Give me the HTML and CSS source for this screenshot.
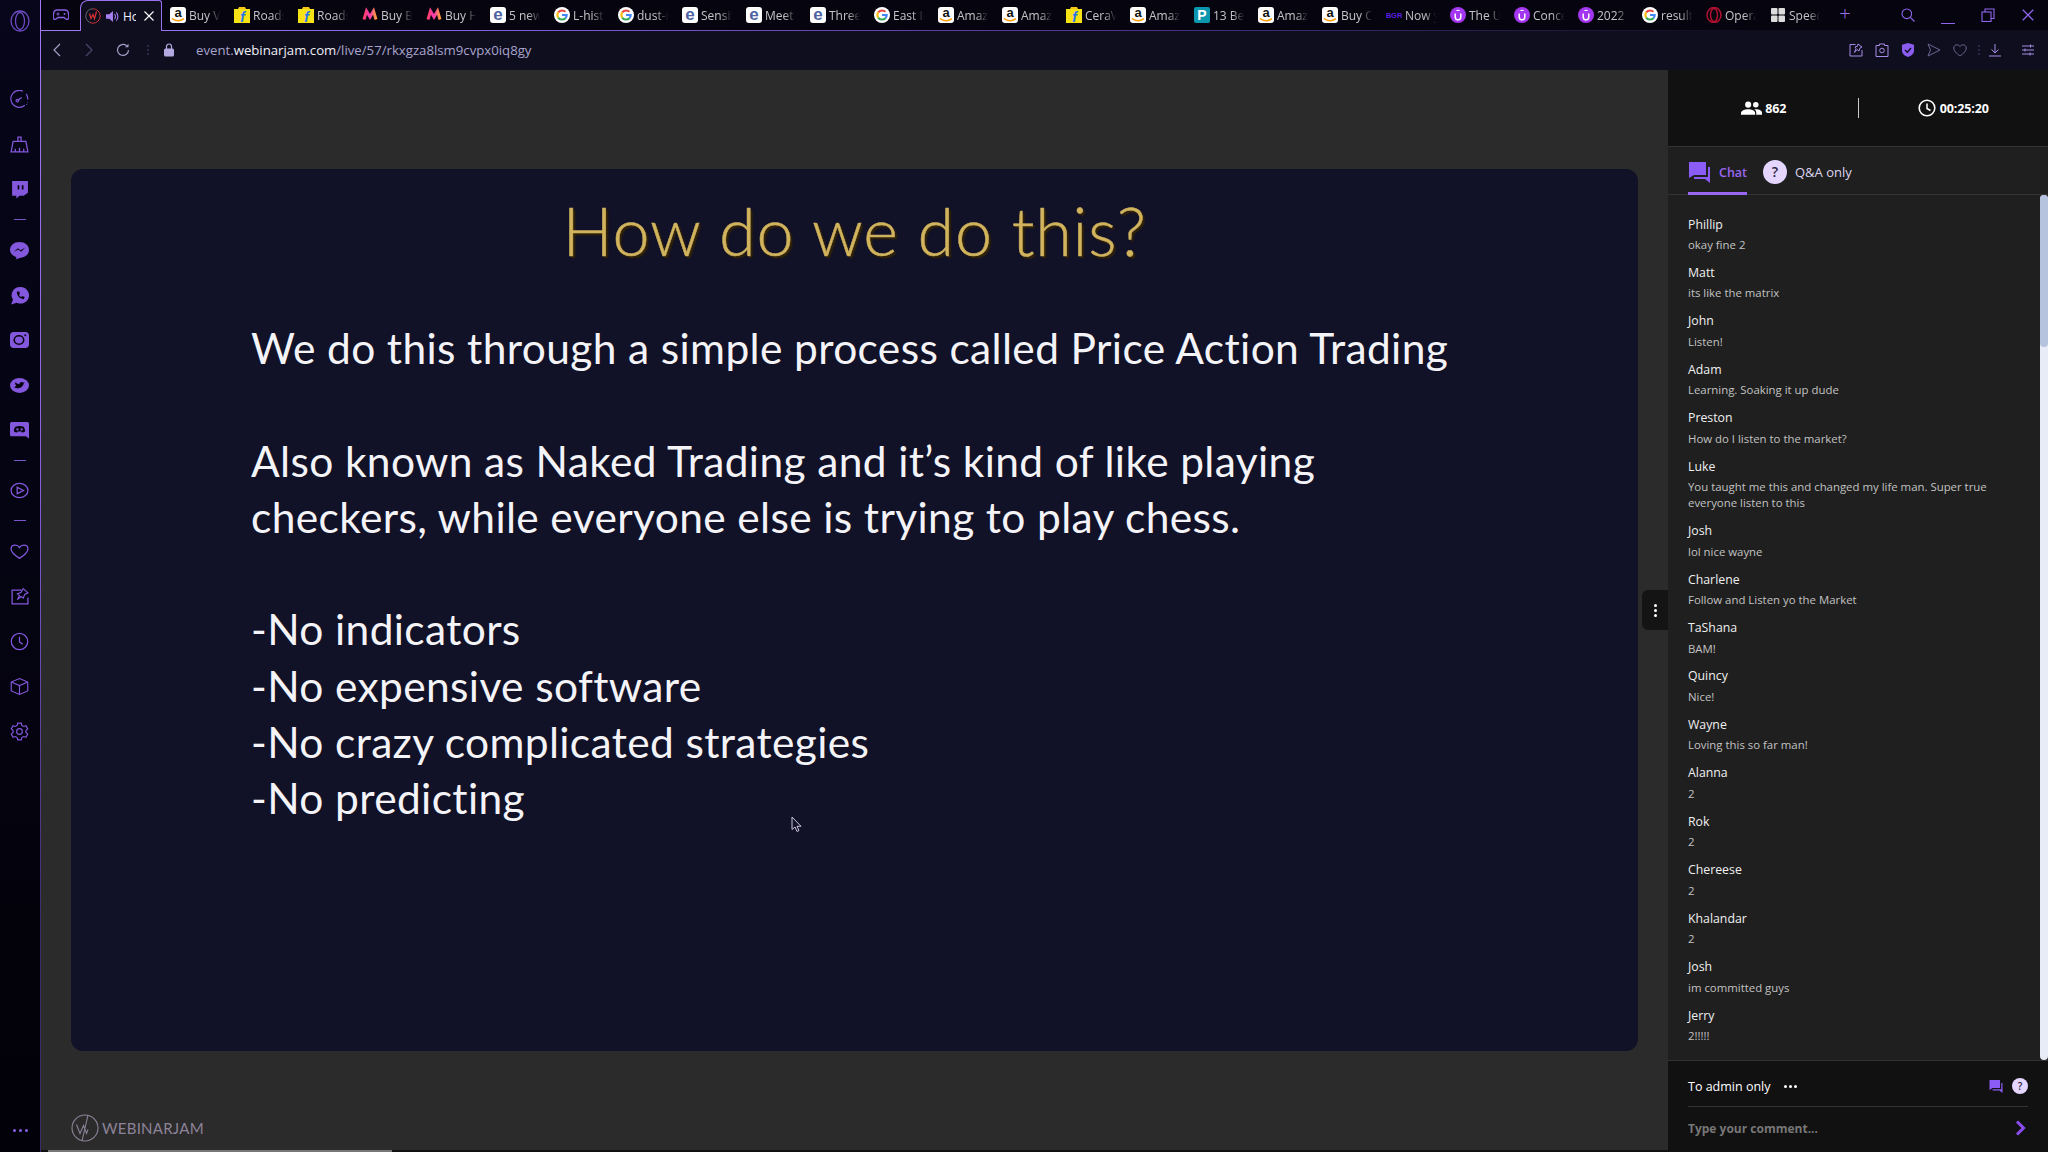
FILE: index.html
```html
<!doctype html>
<html>
<head>
<meta charset="utf-8">
<title>WebinarJam</title>
<link rel="stylesheet" href="styles.css">
</head>
<body>
<svg class="sprite" width="0" height="0">
	<defs>
		<linearGradient id="myn" x1="0" y1="0" x2="1" y2="0"><stop offset="0" stop-color="#ff3f6c"/><stop offset=".5" stop-color="#f13ab1"/><stop offset="1" stop-color="#ff9a3c"/></linearGradient>
		<!-- favicons -->
		<symbol id="f-amz" viewBox="0 0 16 16"><rect width="16" height="16" rx="3" fill="#fff"/><text x="8" y="10" font-size="13" font-weight="700" font-family="Liberation Sans" text-anchor="middle" fill="#111">a</text><path d="M2 11.5c3.500 2.800 8 2.800 12 .2" fill="none" stroke="#f90" stroke-width="1.600"/></symbol>
		<symbol id="f-flip" viewBox="0 0 16 16"><path d="M0 2h16v14H0z" fill="#f7e215"/><path d="M4 2l1-2h6l1 2z" fill="#f5c518"/><text x="8.500" y="14.500" font-size="14" font-weight="700" font-style="italic" font-family="Liberation Sans" text-anchor="middle" fill="#2874f0">f</text></symbol>
		<symbol id="f-myn" viewBox="0 0 16 16"><path d="M2 12.500L4.500 4 8 10l3.500-6L14 12.500" fill="none" stroke="url(#myn)" stroke-width="3"/></symbol>
		<symbol id="f-e" viewBox="0 0 16 16"><rect width="16" height="16" rx="3" fill="#fff"/><text x="8" y="13" font-size="17" font-weight="700" font-family="Liberation Sans" text-anchor="middle" fill="#4d63a5">e</text></symbol>
		<symbol id="f-g" viewBox="0 0 16 16"><circle cx="8" cy="8" r="8" fill="#fff"/><path d="M11.400 4.800A4.700 4.700 0 0 0 4.200 5.400" fill="none" stroke="#ea4335" stroke-width="2"/><path d="M4.200 5.400a4.700 4.700 0 0 0 0 5.200" fill="none" stroke="#fbbc05" stroke-width="2"/><path d="M4.200 10.600a4.700 4.700 0 0 0 7.400.4" fill="none" stroke="#34a853" stroke-width="2"/><path d="M11.600 11a4.700 4.700 0 0 0 1.100-3H8" fill="none" stroke="#4285f4" stroke-width="2"/></symbol>
		<symbol id="f-u" viewBox="0 0 16 16"><circle cx="8" cy="8" r="8" fill="#a435f0"/><path d="M5.200 6.500v3.600a2.800 2.800 0 0 0 5.600 0V6.500" fill="none" stroke="#fff" stroke-width="1.500"/><path d="M8 2.500l2.500 1.500h-5z" fill="#fff"/></symbol>
		<symbol id="f-p" viewBox="0 0 16 16"><rect width="16" height="16" rx="2" fill="#0b97b0"/><text x="8" y="13" font-size="14" font-weight="700" font-family="Liberation Sans" text-anchor="middle" fill="#fff">P</text></symbol>
		<symbol id="f-bgr" viewBox="0 0 16 16"><text x="8" y="11" font-size="7.500" font-weight="700" font-family="Liberation Sans" text-anchor="middle" fill="#5a1fe0">BGR</text></symbol>
		<symbol id="f-op" viewBox="0 0 16 16"><ellipse cx="8" cy="8" rx="7" ry="7.500" fill="none" stroke="#b01030" stroke-width="1.500"/><ellipse cx="8" cy="8" rx="3.500" ry="6.500" fill="none" stroke="#b01030" stroke-width="1.500"/></symbol>
		<symbol id="f-sp" viewBox="0 0 16 16"><g fill="#ddd"><rect x="1" y="1" width="6.500" height="6.500" rx="1"/><rect x="8.500" y="1" width="6.500" height="6.500" rx="1"/><rect x="1" y="8.500" width="6.500" height="6.500" rx="1"/><rect x="8.500" y="8.500" width="6.500" height="6.500" rx="1"/></g></symbol>
		<symbol id="f-wj" viewBox="0 0 16 16"><path d="M8 .8a7.200 7.200 0 0 0-3 13.700" fill="none" stroke="#666" stroke-width="1"/><path d="M8 .8a7.200 7.200 0 0 1 0 14.400 7 7 0 0 1-3-.7" fill="none" stroke="#c33" stroke-width="1"/><path d="M4.500 5.500l1.500 5 2-4 1.500 4 2-7" fill="none" stroke="#d33" stroke-width="1.200"/></symbol>

		<!-- sidebar -->
		<symbol id="s-opera" viewBox="0 0 20 22"><ellipse cx="10" cy="11" rx="9" ry="10" fill="none" stroke="currentColor" stroke-width="1.300"/><ellipse cx="10" cy="11" rx="4.500" ry="8.500" fill="none" stroke="currentColor" stroke-width="1.300"/></symbol>
		<symbol id="s-speed" viewBox="0 0 18 18"><path d="M14 14.500A8 8 0 1 1 16.800 9" fill="none" stroke="currentColor" stroke-width="1.100" stroke-dasharray="34 4"/><path d="M7 10l4-3" stroke="currentColor" stroke-width="1.200"/><circle cx="7" cy="10" r="1.300" fill="none" stroke="currentColor"/><path d="M16.500 11.500v.6M15.800 13.500v.6" stroke="currentColor"/></symbol>
		<symbol id="s-broom" viewBox="0 0 18 18"><path d="M7.500 6V2h3v4M3 6h12l2 10H1z M5 16v-3M9 16v-4M13 16v-3" fill="none" stroke="currentColor" stroke-width="1.200"/></symbol>
		<symbol id="s-twitch" viewBox="0 0 18 18"><path d="M2 1h15v11l-4 3H9l-3 2.500V15H2z" fill="currentColor"/><path d="M8 5v4M12 5v4" stroke="#06050f" stroke-width="1.600"/></symbol>
		<symbol id="s-msg" viewBox="0 0 18 18"><path d="M9 1c5 0 9 3.200 9 7.500S14 16 9 16l-3 1.500V15.300C2.500 14 0 11.500 0 8.500 0 4.200 4 1 9 1z" fill="currentColor"/><path d="M3.500 10.500L7.500 6.800l2.500 2 4.500-2.600-4 3.900-2.600-2z" fill="#06050f"/></symbol>
		<symbol id="s-whats" viewBox="0 0 18 18"><path d="M10 1a8 7.800 0 1 1-3.500 14.800L1 17.500l1.800-4.500A8 7.800 0 0 1 10 1z" fill="currentColor"/><path d="M6.500 5.500c0 4 2.500 6.500 6.500 7l1-2-2.300-1-1 1c-1-.4-1.800-1.200-2.200-2.200l1-1-1-2.300z" fill="#06050f"/></symbol>
		<symbol id="s-insta" viewBox="0 0 18 18"><rect y="1" width="18" height="15" rx="3.500" fill="currentColor"/><ellipse cx="8.500" cy="8.500" rx="4.500" ry="4" fill="none" stroke="#06050f" stroke-width="1.500"/><circle cx="14.500" cy="4" r=".9" fill="#06050f"/></symbol>
		<symbol id="s-twit" viewBox="0 0 18 18"><ellipse cx="9" cy="9" rx="9" ry="7" fill="currentColor"/><path d="M4 11c3 1.500 8 .5 9-4l1-1-1.500.2C11 5 8.800 6 9 7.800 7.500 7.800 6 7 5 6c-.5 1.200 0 2.300 1 3-1 .8-1.500 1.500-2 2z" fill="#06050f"/></symbol>
		<symbol id="s-disc" viewBox="0 0 18 18"><path d="M1.500 1h15A1.500 1.500 0 0 1 18 2.500V16.500L15 14.500H1.500A1.500 1.500 0 0 1 0 13V2.500A1.500 1.500 0 0 1 1.500 1z" fill="currentColor"/><path d="M5 5.500c2.500-1 5.500-1 8 0 1 1.500 1.300 3 1.300 4.500-1 .7-2 1-3 1l-.5-1h-3.600l-.5 1c-1 0-2-.3-3-1 0-1.500.3-3 1.300-4.500z" fill="#06050f"/><circle cx="7" cy="8" r="1.100" fill="currentColor"/><circle cx="11" cy="8" r="1.100" fill="currentColor"/></symbol>
		<symbol id="s-play" viewBox="0 0 18 18"><ellipse cx="9" cy="9" rx="8" ry="6.800" fill="none" stroke="currentColor" stroke-width="1.200"/><path d="M6.800 6v6l6-3z" fill="none" stroke="currentColor" stroke-width="1.200"/></symbol>
		<symbol id="s-heart" viewBox="0 0 18 18"><path d="M9 15.500C4 12.500 1 10 1 6.500 1 4 3 3 5 3c1.800 0 3.200 1 4 2.300C9.800 4 11.200 3 13 3c2 0 4 1 4 3.500 0 3.500-3 6-8 9z" fill="none" stroke="currentColor" stroke-width="1.200"/></symbol>
		<symbol id="s-pin" viewBox="0 0 18 18"><path d="M11 3H2v13h15v-6" fill="none" stroke="currentColor" stroke-width="1.200"/><path d="M12.500 1.500l4.500 4-3 1.500-1.500 3.500-2-1.500-3.500 3 2-4-2-1.500 3.500-1.500z" fill="none" stroke="currentColor" stroke-width="1.100"/></symbol>
		<symbol id="s-clock" viewBox="0 0 18 18"><circle cx="9" cy="9" r="7.800" fill="none" stroke="currentColor" stroke-width="1.200"/><path d="M9 4.500V9.500l3 2" fill="none" stroke="currentColor" stroke-width="1.200"/></symbol>
		<symbol id="s-box" viewBox="0 0 18 18"><path d="M9 1.500l7.800 3.300v8.400L9 16.500 1.200 13.200V4.800zM1.200 4.800L9 8.200l7.800-3.400M9 8.200v8.300" fill="none" stroke="currentColor" stroke-width="1.100"/></symbol>
		<symbol id="s-gear" viewBox="0 0 18 18"><path d="M7.300 1h3.400l.5 2.200 1.700 1 2.200-.7 1.700 3-1.700 1.500v2l1.700 1.500-1.700 3-2.200-.7-1.700 1-.5 2.200H7.300l-.5-2.200-1.700-1-2.200.7-1.700-3L2.900 10V8L1.200 6.500l1.700-3 2.200.7 1.700-1z" fill="none" stroke="currentColor" stroke-width="1.100"/><circle cx="9" cy="9" r="2.700" fill="none" stroke="currentColor" stroke-width="1.100"/></symbol>

		<!-- browser chrome -->
		<symbol id="b-game" viewBox="0 0 16 14"><path d="M4 2h8c2 0 3.300 1.500 3.500 4l.3 3c.2 2-1.800 3.200-3.300 1.800L11 9.500H5l-1.500 1.300C2 12.200 0 11 .2 9l.3-3C.7 3.500 2 2 4 2z" fill="none" stroke="currentColor" stroke-width="1.300"/><path d="M3.500 6h3M5 4.500v3" stroke="currentColor"/><circle cx="11.500" cy="6" r="1" fill="currentColor"/></symbol>
		<symbol id="b-vol" viewBox="0 0 14 14"><path d="M0 4.500h3.500L7.500 1v12L3.500 9.500H0z" fill="currentColor"/><path d="M9.200 4.500a3.500 3.500 0 0 1 0 5M11 2.500a6.500 6.500 0 0 1 0 9" fill="none" stroke="currentColor" stroke-width="1.200"/></symbol>
		<symbol id="b-x" viewBox="0 0 12 12"><path d="M1.500 1.500l9 9M10.500 1.500l-9 9" stroke="currentColor" stroke-width="1.100" fill="none"/></symbol>
		<symbol id="b-back" viewBox="0 0 10 14"><path d="M8 1L2 7l6 6" fill="none" stroke="currentColor" stroke-width="1.200"/></symbol>
		<symbol id="b-fwd" viewBox="0 0 10 14"><path d="M2 1l6 6-6 6" fill="none" stroke="currentColor" stroke-width="1.200"/></symbol>
		<symbol id="b-reload" viewBox="0 0 14 14"><path d="M12.500 7A5.500 5.500 0 1 1 10.500 2.700" fill="none" stroke="currentColor" stroke-width="1.200"/><path d="M12.500 .8v3.500H9z" fill="currentColor"/></symbol>
		<symbol id="b-lock" viewBox="0 0 10 14"><rect y="5.500" width="10" height="8" rx="1.500" fill="currentColor"/><path d="M2.500 6V3.500a2.500 2.500 0 0 1 5 0V6" fill="none" stroke="currentColor" stroke-width="1.200"/></symbol>
		<symbol id="b-snap" viewBox="0 0 14 14"><path d="M6.500 1.500H1v11.500h12V7" fill="none" stroke="currentColor" stroke-width="1"/><path d="M9 1l4 3-2 1-1 3-2-1.500-2.500 3 1.500-4-1-1.500 2.500-.8z" fill="none" stroke="currentColor"/></symbol>
		<symbol id="b-cam" viewBox="0 0 14 14"><path d="M4.500 2.500V1h5v1.500h3.500v11H1v-11z" fill="none" stroke="currentColor" stroke-width="1"/><circle cx="7" cy="7.500" r="2.300" fill="none" stroke="currentColor"/></symbol>
		<symbol id="b-shield" viewBox="0 0 14 14"><path d="M7 0l6 1.800v6C13 11 10 13 7 14c-3-1-6-3-6-6.200v-6z" fill="#8b5cf0"/><path d="M4 7l2.300 2.200L10 5" fill="none" stroke="#0f0e1e" stroke-width="1.400"/></symbol>
		<symbol id="b-send" viewBox="0 0 14 14"><path d="M1 1l12 6-12 6 2.500-6z" fill="none" stroke="currentColor" stroke-width="1"/></symbol>
		<symbol id="b-heart" viewBox="0 0 14 14"><path d="M7 13C3 10 .8 8 .8 5 .8 3 2.300 1.800 4 1.800 5.300 1.800 6.400 2.500 7 3.600c.6-1.100 1.700-1.800 3-1.800 1.700 0 3.200 1.200 3.200 3.200 0 3-2.200 5-6.200 8z" fill="none" stroke="currentColor"/></symbol>
		<symbol id="b-dl" viewBox="0 0 14 14"><path d="M7 1v8.500M3.500 6.500L7 10l3.500-3.500M1 13h12" fill="none" stroke="currentColor" stroke-width="1"/></symbol>
		<symbol id="b-set" viewBox="0 0 14 14"><path d="M1 3h12M1 7h12M1 11h12M9.500 1.500v3M4 5.500v3M9 9.500v3" stroke="currentColor" fill="none"/></symbol>
		<symbol id="b-search" viewBox="0 0 14 14"><circle cx="5.800" cy="5.800" r="4.800" fill="none" stroke="currentColor" stroke-width="1.100"/><path d="M9.300 9.300L13.500 13.500" stroke="currentColor" stroke-width="1.100"/></symbol>
		<symbol id="b-rest" viewBox="0 0 14 14"><rect x="1" y="4" width="9" height="9.500" fill="none" stroke="currentColor" stroke-width="1.100"/><path d="M4 4V1h9v9.500h-3" fill="none" stroke="currentColor" stroke-width="1.100"/></symbol>

		<!-- panel -->
		<symbol id="p-people" viewBox="0 0 22 14"><circle cx="7.500" cy="3.500" r="3.200" fill="currentColor"/><circle cx="15.500" cy="3.500" r="2.900" fill="currentColor"/><path d="M0 14v-1.800C0 9.500 4 8.200 7.500 8.200s7.300 1.300 7.300 4V14z" fill="currentColor"/><path d="M16 14v-2c0-1.500-.7-2.700-2-3.600 4-.6 8 .8 8 3.600v2z" fill="currentColor"/></symbol>
		<symbol id="p-clock" viewBox="0 0 18 18"><circle cx="9" cy="9" r="7.800" fill="none" stroke="currentColor" stroke-width="1.600"/><path d="M9 4.500v5l3.500 2" fill="none" stroke="currentColor" stroke-width="1.500"/></symbol>
		<symbol id="p-chat" viewBox="0 0 21 21"><path d="M0 0h17v13H5l-5 3z" fill="currentColor"/><path d="M19 5h2v16l-5-4H5v-2h14z" fill="currentColor"/></symbol>
		<symbol id="p-wj" viewBox="0 0 28 28"><circle cx="14" cy="14" r="13" fill="none" stroke="currentColor" stroke-width="1.100"/><path d="M5.500 10.500l3.500 9 3.500-8 3 8 1.500-4M17 1l-6 26" fill="none" stroke="currentColor" stroke-width="1.100"/></symbol>
	</defs>
</svg>

<div class="browser">
	<aside class="sidebar">
		<div class="side-logo"><svg class="opera"><use href="#s-opera"/></svg></div>
		<a class="side-item"><svg><use href="#s-speed"/></svg></a>
		<a class="side-item"><svg><use href="#s-broom"/></svg></a>
		<a class="side-item"><svg><use href="#s-twitch"/></svg></a>
		<i class="side-sep"></i>
		<a class="side-item"><svg><use href="#s-msg"/></svg></a>
		<a class="side-item"><svg><use href="#s-whats"/></svg></a>
		<a class="side-item"><svg><use href="#s-insta"/></svg></a>
		<a class="side-item"><svg><use href="#s-twit"/></svg></a>
		<a class="side-item"><svg><use href="#s-disc"/></svg></a>
		<i class="side-sep"></i>
		<a class="side-item"><svg><use href="#s-play"/></svg></a>
		<i class="side-sep"></i>
		<a class="side-item"><svg><use href="#s-heart"/></svg></a>
		<a class="side-item"><svg><use href="#s-pin"/></svg></a>
		<a class="side-item"><svg><use href="#s-clock"/></svg></a>
		<a class="side-item"><svg><use href="#s-box"/></svg></a>
		<a class="side-item"><svg><use href="#s-gear"/></svg></a>
		<div class="side-dots"><b></b><b></b><b></b></div>
	</aside>

	<div class="window">
		<div class="tabstrip">
			<div class="tab-game"><svg><use href="#b-game"/></svg></div>
			<div class="tab-active">
				<svg class="fav"><use href="#f-wj"/></svg>
				<svg class="vol"><use href="#b-vol"/></svg>
				<span class="tab-active-name">How</span>
				<svg class="tab-x"><use href="#b-x"/></svg>
			</div>
			<div class="tab"><svg class="fav"><use href="#f-amz"/></svg><span>Buy Vivo</span></div>
			<div class="tab"><svg class="fav"><use href="#f-flip"/></svg><span>Roadster</span></div>
			<div class="tab"><svg class="fav"><use href="#f-flip"/></svg><span>Roadster</span></div>
			<div class="tab"><svg class="fav"><use href="#f-myn"/></svg><span>Buy Bata</span></div>
			<div class="tab"><svg class="fav"><use href="#f-myn"/></svg><span>Buy HRX</span></div>
			<div class="tab"><svg class="fav"><use href="#f-e"/></svg><span>5 new</span></div>
			<div class="tab"><svg class="fav"><use href="#f-g"/></svg><span>L-histidine</span></div>
			<div class="tab"><svg class="fav"><use href="#f-g"/></svg><span>dust-mite</span></div>
			<div class="tab"><svg class="fav"><use href="#f-e"/></svg><span>Sensitive</span></div>
			<div class="tab"><svg class="fav"><use href="#f-e"/></svg><span>Meet</span></div>
			<div class="tab"><svg class="fav"><use href="#f-e"/></svg><span>Three</span></div>
			<div class="tab"><svg class="fav"><use href="#f-g"/></svg><span>East India</span></div>
			<div class="tab"><svg class="fav"><use href="#f-amz"/></svg><span>Amazon</span></div>
			<div class="tab"><svg class="fav"><use href="#f-amz"/></svg><span>Amazon</span></div>
			<div class="tab"><svg class="fav"><use href="#f-flip"/></svg><span>CeraVe</span></div>
			<div class="tab"><svg class="fav"><use href="#f-amz"/></svg><span>Amazon</span></div>
			<div class="tab"><svg class="fav"><use href="#f-p"/></svg><span>13 Best</span></div>
			<div class="tab"><svg class="fav"><use href="#f-amz"/></svg><span>Amazon</span></div>
			<div class="tab"><svg class="fav"><use href="#f-amz"/></svg><span>Buy Cera</span></div>
			<div class="tab"><svg class="fav"><use href="#f-bgr"/></svg><span>Now you</span></div>
			<div class="tab"><svg class="fav"><use href="#f-u"/></svg><span>The Ultimate</span></div>
			<div class="tab"><svg class="fav"><use href="#f-u"/></svg><span>Concepts</span></div>
			<div class="tab"><svg class="fav"><use href="#f-u"/></svg><span>2022 Guide</span></div>
			<div class="tab"><svg class="fav"><use href="#f-g"/></svg><span>result</span></div>
			<div class="tab"><svg class="fav"><use href="#f-op"/></svg><span>Opera</span></div>
			<div class="tab"><svg class="fav"><use href="#f-sp"/></svg><span>Speed Dial</span></div>
			<div class="tab-plus">+</div>
			<div class="win-btns">
				<svg><use href="#b-search"/></svg>
				<i class="win-min"></i>
				<svg><use href="#b-rest"/></svg>
				<svg><use href="#b-x"/></svg>
			</div>
		</div>

		<div class="addressbar">
			<svg class="nav nav-on"><use href="#b-back"/></svg>
			<svg class="nav nav-off"><use href="#b-fwd"/></svg>
			<svg class="nav nav-on nav-reload"><use href="#b-reload"/></svg>
			<i class="addr-dots"></i>
			<svg class="lock"><use href="#b-lock"/></svg>
			<div class="url">event.<b>webinarjam.com</b>/live/57/rkxgza8lsm9cvpx0iq8gy</div>
			<div class="addr-tools">
				<svg><use href="#b-snap"/></svg>
				<svg><use href="#b-cam"/></svg>
				<svg><use href="#b-shield"/></svg>
				<svg class="dim"><use href="#b-send"/></svg>
				<svg class="dim"><use href="#b-heart"/></svg>
				<i class="addr-dots tool-dots"></i>
				<svg class="tool-dl"><use href="#b-dl"/></svg>
				<svg class="tool-set"><use href="#b-set"/></svg>
			</div>
		</div>

		<div class="content">
			<main class="stage">
				<section class="slide">
					<h1 class="slide-title">How do we do this?</h1>
					<p>We do this through a simple process called Price Action Trading</p>
					<p>Also known as Naked Trading and it’s kind of like playing<br>checkers, while everyone else is trying to play chess.</p>
					<p>-No indicators<br>-No expensive software<br>-No crazy complicated strategies<br>-No predicting</p>
					<svg class="cursor" width="12" height="18" viewBox="0 0 12 18"><path d="M1 1v12.500l3-2.500 2 4.500 2-1-2-4.200h4z" fill="#15142c" stroke="#c8c6d8" stroke-width="1"/></svg>
				</section>
				<footer class="brand">
					<svg><use href="#p-wj"/></svg>
					<span>WEBINARJAM</span>
				</footer>
			</main>

			<aside class="panel">
				<div class="handle"><b></b><b></b><b></b></div>
				<div class="stats">
					<div class="stat stat-first"><svg class="stat-people"><use href="#p-people"/></svg>862</div>
					<i class="stat-sep"></i>
					<div class="stat"><svg class="stat-clock"><use href="#p-clock"/></svg>00:25:20</div>
				</div>
				<div class="chat-tabs">
					<div class="chat-tab"><svg><use href="#p-chat"/></svg>Chat</div>
					<div class="qa-tab"><span class="qa-badge">?</span>Q&amp;A only</div>
				</div>
				<div class="chat-wrap">
					<div class="chat">
						<div class="msg"><h4>Phillip</h4><p>okay fine 2</p></div>
						<div class="msg"><h4>Matt</h4><p>its like the matrix</p></div>
						<div class="msg"><h4>John</h4><p>Listen!</p></div>
						<div class="msg"><h4>Adam</h4><p>Learning. Soaking it up dude</p></div>
						<div class="msg"><h4>Preston</h4><p>How do I listen to the market?</p></div>
						<div class="msg"><h4>Luke</h4><p>You taught me this and changed my life man. Super true everyone listen to this</p></div>
						<div class="msg"><h4>Josh</h4><p>lol nice wayne</p></div>
						<div class="msg"><h4>Charlene</h4><p>Follow and Listen yo the Market</p></div>
						<div class="msg"><h4>TaShana</h4><p>BAM!</p></div>
						<div class="msg"><h4>Quincy</h4><p>Nice!</p></div>
						<div class="msg"><h4>Wayne</h4><p>Loving this so far man!</p></div>
						<div class="msg"><h4>Alanna</h4><p>2</p></div>
						<div class="msg"><h4>Rok</h4><p>2</p></div>
						<div class="msg"><h4>Chereese</h4><p>2</p></div>
						<div class="msg"><h4>Khalandar</h4><p>2</p></div>
						<div class="msg"><h4>Josh</h4><p>im committed guys</p></div>
						<div class="msg"><h4>Jerry</h4><p>2!!!!!</p></div>
					</div>
					<div class="scroll"><div class="scroll-thumb"></div></div>
				</div>
				<div class="compose">
					<div class="compose-top">
						<span>To admin only</span>
						<span class="compose-dots"><b></b><b></b><b></b></span>
						<svg class="compose-chat"><use href="#p-chat"/></svg>
						<span class="qa-badge qa-small">?</span>
					</div>
					<div class="compose-input">
						<span>Type your comment...</span>
						<svg width="11" height="16" viewBox="0 0 11 16"><path d="M2 1.500L8.500 8 2 14.500" fill="none" stroke="#8b4df0" stroke-width="3"/></svg>
					</div>
				</div>
			</aside>
		</div>
		<div class="hbar"><div class="hbar-thumb"></div></div>
	</div>
</div>
</body>
</html>
```

FILE: styles.css
```css
html,body{margin:0;padding:0;width:2048px;height:1152px;overflow:hidden;background:#000;}
body{font-family:"Open Sans","Noto Sans",sans-serif;color:#fff;}
.sprite{display:block;position:absolute;}
h1,h4,p{margin:0;font-weight:normal;}
i{font-style:normal;display:block;}
svg{display:block;flex:none;}

.browser{display:flex;width:2048px;height:1152px;}

/* left opera bar */
.sidebar{width:40px;flex:none;display:flex;flex-direction:column;align-items:center;color:#8358dc;background:linear-gradient(#07061a,#020108);border-right:1px solid;border-image:linear-gradient(#a27af5,#8a5fe6 40%,#3c2c6c 80%) 1;box-sizing:content-box;}
.side-logo{height:42px;margin-bottom:35px;display:flex;align-items:center;justify-content:center;}
.opera{width:20px;height:22px;color:#6d4bc0;}
.side-item{height:45px;display:flex;align-items:center;justify-content:center;margin-left:-1px;}
.side-item svg{width:19px;height:19px;}
.side-sep{width:12px;height:1px;margin:7px 0 7.500px;background:#7a55cc;}
.side-dots{margin-top:auto;margin-bottom:20px;display:flex;gap:3px;}
.side-dots b{width:3px;height:3px;border-radius:50%;background:#8b5cf0;}

/* tabs */
.window{flex:1;display:flex;flex-direction:column;min-width:0;}
.tabstrip{height:30px;flex:none;display:flex;background:#06050f;border-bottom:1px solid;border-image:linear-gradient(90deg,#a27af5,#8a5fe6 20%,#4a3288 55%,#0e0d1c 85%) 1;}
.tab-game{width:39px;display:flex;align-items:center;justify-content:center;color:#8b5fe6;}
.tab-game svg{width:16px;height:14px;}
.tab-active{width:76px;margin:0 8px -1px 0;display:flex;align-items:center;background:#0f0e1e;border:1px solid #9a72f0;border-bottom:0;border-top-left-radius:8px;border-top-right-radius:3px;padding-left:4px;box-sizing:content-box;}
.tab-active .fav{margin-right:5px;}
.vol{width:13px;height:13px;color:#a67ff0;margin-right:4px;}
.tab-active-name{width:13px;overflow:hidden;font-size:12px;color:#f4f2ff;white-space:nowrap;margin-right:7px;}
.tab-x{width:12px;height:12px;color:#fff;}
.fav{width:16px;height:16px;}
.tab{width:64px;flex:none;display:flex;align-items:center;gap:3px;font-size:12px;color:#c4c4c8;}
.tab span{width:32px;overflow:hidden;white-space:nowrap;-webkit-mask-image:linear-gradient(90deg,#000 60%,transparent 98%);mask-image:linear-gradient(90deg,#000 60%,transparent 98%);}
.tab-plus{width:24px;margin-left:-1px;font-size:20px;line-height:28px;text-align:center;color:#9a72f0;font-weight:300;}
.win-btns{margin-left:auto;display:flex;align-items:center;color:#8f66ee;}
.win-btns svg,.win-min{width:14px;height:14px;margin:0 13px;}
.win-btns svg{margin-top:-1px;}
.win-min{height:1px;background:#8f66ee;margin-top:16px;}

/* address bar */
.addressbar{height:39px;flex:none;display:flex;align-items:center;background:#0f0e1e;padding-bottom:1px;box-sizing:border-box;}
.nav{width:10px;height:14px;margin:0 11px;}
.nav-on{color:#a29ec6;}
.nav-off{color:#4b4870;}
.nav-reload{width:14px;margin:0 9px 0 11px;}
.addr-dots{width:2px;height:10px;margin:0 8px;background:repeating-linear-gradient(#2a2848 0 2px,transparent 2px 4px);}
.lock{width:10px;height:14px;margin:0 22px 0 7px;color:#b3a8e0;}
.url{font-size:13.200px;color:#a8a4cc;white-space:nowrap;}
.url b{font-weight:normal;color:#eeeef6;}
.addr-tools{margin-left:auto;margin-right:13px;display:flex;align-items:center;color:#a68ce4;}
.addr-tools svg{width:14px;height:14px;margin:0 6px;}
.addr-tools .dim{color:#6c6494;}
.tool-dots{margin:0 1px 0 5px;}
.addr-tools .tool-dl{margin-left:7px;}
.addr-tools .tool-set{margin-left:13px;margin-right:0;}

/* webinar */
.content{flex:1;display:flex;min-height:0;}
.stage{flex:1;min-width:0;background:#2b2b2b;padding:99px 30px 0;display:flex;flex-direction:column;}
.slide{height:882px;flex:none;position:relative;box-sizing:border-box;background:#111127;border-radius:12px;padding:25px 0 0 180px;font-family:Lato,"Open Sans",sans-serif;font-size:42.500px;letter-spacing:.36px;line-height:56.250px;color:#f4f4f8;}
.slide-title{margin:0 0 0 -180px;height:126px;font-size:66.500px;letter-spacing:.8px;line-height:72px;font-weight:300;text-align:center;color:#d2b45c;-webkit-text-stroke:.5px #c8ad62;text-shadow:2px 2px 2px #3a2800;}
.slide p{margin-bottom:56.250px;}
.cursor{position:absolute;left:720px;top:647px;}
.brand{margin-top:63px;display:flex;align-items:center;gap:3px;color:#8d8398;font-family:Lato,"Open Sans",sans-serif;font-size:15px;letter-spacing:.25px;}
.brand svg{width:28px;height:28px;}

/* chat panel */
.panel{width:380px;flex:none;position:relative;display:flex;flex-direction:column;background:#1f1f1f;}
.handle{position:absolute;left:-26px;top:520px;width:26px;height:40px;box-sizing:border-box;background:#141414;border-radius:6px 0 0 6px;display:flex;flex-direction:column;align-items:center;justify-content:center;gap:2px;}
.handle b{width:3px;height:3px;background:#fff;border-radius:50%;}
.stats{height:76px;flex:none;display:flex;align-items:center;background:#111;border-bottom:1px solid #333;font-size:12.500px;font-weight:700;}
.stat{width:190px;display:flex;align-items:center;justify-content:center;gap:4px;letter-spacing:-.1px;}
.stat-first{padding-left:2px;box-sizing:border-box;gap:3px;}
.stat-sep{width:1px;height:20px;background:#ccc;}
.stat-people{width:21px;height:14px;}
.stat-clock{width:18px;height:18px;}
.chat-tabs{height:47px;flex:none;display:flex;align-items:stretch;padding-left:20px;border-bottom:1px solid #333;font-size:13px;}
.chat-tab{width:59px;display:flex;align-items:center;gap:9px;color:#9a66f2;font-size:12.500px;font-weight:600;border-bottom:3px solid #9a66f2;margin-bottom:-1px;box-sizing:border-box;padding:5px 0 0 1px;}
.chat-tab svg{width:21px;height:21px;color:#8b5cf6;}
.qa-tab{margin-left:16px;padding-top:2px;display:flex;align-items:center;gap:8px;color:#ddd6f0;}
.qa-badge{width:24px;height:24px;border-radius:50%;background:#e4d6ff;color:#2b2440;font-size:14px;font-weight:600;text-align:center;line-height:24px;}
.chat-wrap{flex:1;min-height:0;display:flex;}
.chat{flex:1;min-width:0;overflow:hidden;padding:19.500px 20px 0;}
.msg{margin-bottom:9.950px;}
.msg h4{font-size:12.300px;line-height:20px;color:#f0f0f0;}
.msg p{font-size:11.400px;line-height:16px;margin-top:2.500px;color:#c2c2c2;}
.scroll{width:8px;flex:none;background:#e8ecf6;border-radius:4px;}
.scroll-thumb{height:152px;background:#b6c3df;border-radius:4px;}
.compose{height:90px;flex:none;box-sizing:border-box;padding:0 20px;background:#111;border-top:1px solid #333;}
.compose-top{height:46px;box-sizing:border-box;padding-top:5px;display:flex;align-items:center;border-bottom:1px solid #333;font-size:12.500px;}
.compose-dots{margin-left:13px;display:flex;gap:2px;}
.compose-dots b{width:3px;height:3px;border-radius:50%;background:#fff;}
.compose-chat{margin-left:auto;width:14px;height:13px;color:#8b5cf6;}
.qa-small{width:16px;height:16px;line-height:16px;font-size:10px;margin-left:9px;}
.compose-input{height:42px;display:flex;align-items:center;justify-content:space-between;font-size:12px;font-weight:700;color:#777;padding-right:2px;}
.hbar{height:2px;flex:none;background:#111;}
.hbar-thumb{width:344px;height:2px;margin-left:7px;background:#777;}
```
